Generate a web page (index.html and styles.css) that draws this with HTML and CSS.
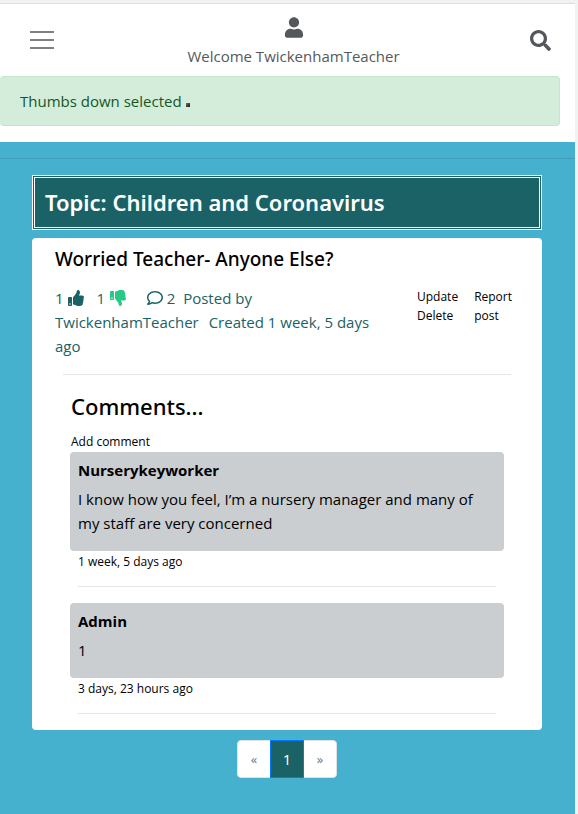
FILE: index.html
```html
<!DOCTYPE html>
<html lang="en">
<head>
<meta charset="utf-8">
<meta name="viewport" content="width=device-width, initial-scale=1">
<title>Topic: Children and Coronavirus</title>
<link rel="stylesheet" href="styles.css">
</head>
<body>
<div class="page">
  <header class="navbar">
    <button class="nav-toggle" type="button" aria-label="Menu">
      <svg viewBox="0 0 30 30" width="30" height="30"><path d="M3 7h24M3 15h24M3 23h24" stroke="#808080" stroke-width="2"/></svg>
    </button>
    <a class="account" href="#">
      <svg viewBox="0 0 448 512" width="18" height="21"><path fill="currentColor" d="M224 256c70.7 0 128-57.3 128-128S294.7 0 224 0 96 57.3 96 128s57.3 128 128 128zm89.6 32h-16.7c-22.2 10.2-46.9 16-72.9 16s-50.6-5.8-72.9-16h-16.7C60.2 288 0 348.2 0 422.4V464c0 26.5 21.5 48 48 48h352c26.5 0 48-21.5 48-48v-41.6c0-74.2-60.2-134.4-134.4-134.4z"/></svg>
      <span>Welcome TwickenhamTeacher</span>
    </a>
    <button class="search" type="button" aria-label="Search">
      <svg viewBox="0 0 512 512" width="21" height="21"><path fill="currentColor" d="M505 442.7L405.3 343c-4.5-4.5-10.6-7-17-7H372c27.6-35.3 44-79.7 44-128C416 93.1 322.9 0 208 0S0 93.1 0 208s93.1 208 208 208c48.3 0 92.7-16.4 128-44v16.3c0 6.4 2.5 12.5 7 17l99.7 99.7c9.4 9.4 24.6 9.4 33.9 0l28.3-28.3c9.4-9.4 9.4-24.6.1-34zM208 336c-70.7 0-128-57.2-128-128 0-70.7 57.2-128 128-128 70.7 0 128 57.2 128 128 0 70.7-57.2 128-128 128z"/></svg>
    </button>
  </header>
  <div class="alert" role="alert">Thumbs down selected <span class="mark"></span></div>
  <main class="content">
    <hr class="rule-top">
    <div class="container">
      <h1 class="topic">Topic: Children and Coronavirus</h1>
      <article class="card">
        <h2 class="post-title">Worried Teacher- Anyone Else?</h2>
        <div class="post-row">
          <p class="meta">
            <a href="#" class="vote">1 <svg viewBox="0 0 512 512" width="16" height="16" aria-hidden="true"><path fill="#1a6265" d="M104 224H24c-13.255 0-24 10.745-24 24v240c0 13.255 10.745 24 24 24h80c13.255 0 24-10.745 24-24V248c0-13.255-10.745-24-24-24zM64 472c-13.255 0-24-10.745-24-24s10.745-24 24-24 24 10.745 24 24-10.745 24-24 24zM384 81.452c0 42.416-25.97 66.208-33.277 94.548h101.723c33.397 0 59.397 27.746 59.553 58.098.084 17.938-7.546 37.249-19.439 49.197l-.11.11c9.836 23.337 8.237 56.037-9.308 79.469 8.681 25.895-.069 57.704-16.382 74.757 4.298 17.598 2.244 32.575-6.148 44.632C440.202 511.587 389.616 512 346.839 512l-2.845-.001c-48.287-.017-87.806-17.598-119.56-31.725-15.957-7.099-36.821-15.887-52.651-16.178-6.54-.12-11.783-5.457-11.783-11.998v-213.77c0-3.2 1.282-6.271 3.558-8.521 39.614-39.144 56.648-80.587 89.117-113.111 14.804-14.832 20.188-37.236 25.393-58.902C282.515 39.293 291.817 0 312 0c24 0 72 8 72 81.452z"/></svg></a>
            <a href="#" class="vote">1 <svg viewBox="0 0 512 512" width="16" height="16" aria-hidden="true"><path fill="#28c987" d="M0 56v240c0 13.255 10.745 24 24 24h80c13.255 0 24-10.745 24-24V56c0-13.255-10.745-24-24-24H24C10.745 32 0 42.745 0 56zm40 200c0-13.255 10.745-24 24-24s24 10.745 24 24-10.745 24-24 24-24-10.745-24-24zm272 256c-20.183 0-29.485-39.293-33.931-57.795-5.206-21.666-10.589-44.07-25.393-58.902-32.469-32.524-49.503-73.967-89.117-113.111a11.98 11.98 0 0 1-3.558-8.521V59.901c0-6.541 5.243-11.878 11.783-11.998 15.831-.29 36.694-9.079 52.651-16.178C256.189 17.598 295.709.017 343.995 0h2.844c42.777 0 93.363.413 113.774 29.737 8.392 12.057 10.446 27.034 6.148 44.632 16.312 17.053 25.063 48.863 16.382 74.757 17.544 23.432 19.143 56.132 9.308 79.469l.11.11c11.893 11.949 19.523 31.259 19.439 49.197-.156 30.352-26.157 58.098-59.553 58.098H350.723C358.03 364.34 384 388.132 384 430.548 384 504 336 512 312 512z"/></svg></a>
            <span class="replies"><svg viewBox="0 0 512 512" width="16" height="16" aria-hidden="true"><path fill="#1a6265" d="M256 32C114.6 32 0 125.1 0 240c0 47.6 19.9 91.2 52.9 126.3C38 405.7 7 439.1 6.5 439.5c-6.6 7-8.4 17.2-4.6 26S14.4 480 24 480c61.5 0 110-25.7 139.1-46.3C192 442.8 223.2 448 256 448c141.4 0 256-93.1 256-208S397.4 32 256 32zm0 368c-26.7 0-53.1-4.1-78.4-12.1l-22.7-7.2-19.5 13.8c-14.3 10.1-33.9 21.4-57.5 29 7.3-12.1 14.4-25.7 19.9-40.2l10.6-28.1-20.6-21.8C69.7 314.1 48 282.2 48 240c0-88.2 93.3-160 208-160s208 71.8 208 160-93.3 160-208 160z"/></svg> 2</span>
            Posted by <span class="author">TwickenhamTeacher</span>
            Created 1 week, 5 days ago
          </p>
          <nav class="actions">
            <div><a href="#">Update</a><a href="#">Delete</a></div>
            <div><a href="#">Report post</a></div>
          </nav>
        </div>
        <hr class="rule-post">
        <section class="comments">
          <h3 class="comments-title">Comments...</h3>
          <a class="add-comment" href="#">Add comment</a>
          <div class="comment">
            <h4>Nurserykeyworker</h4>
            <p>I know how you feel, I’m a nursery manager and many of my staff are very concerned</p>
          </div>
          <p class="time">1 week, 5 days ago</p>
          <hr class="rule-comment">
          <div class="comment">
            <h4>Admin</h4>
            <p>1</p>
          </div>
          <p class="time">3 days, 23 hours ago</p>
          <hr class="rule-comment">
        </section>
      </article>
      <nav class="pagination" aria-label="Pages">
        <a href="#" class="step">«</a><a href="#" class="current">1</a><a href="#" class="step">»</a>
      </nav>
    </div>
  </main>
</div>
</body>
</html>
```
FILE: styles.css
```css
* { box-sizing: border-box; }

body {
  margin: 0;
  padding: 3px 3px 0 0;
  background: #f1f3f3;
  font-family: "Open Sans", "Noto Sans", sans-serif;
  font-size: 15px;
  line-height: 24px;
  color: #000;
}

h1, h2, h3, h4, p { margin: 0; }
hr { height: 1px; border: 0; margin: 0; background: #e5e5e5; }
a { color: inherit; text-decoration: none; }
svg { fill: none; }

.page {
  display: flex;
  flex-direction: column;
  min-height: calc(100vh - 3px);
  background: #fff;
  border-top: 1px solid #dcdfdf;
}

.navbar {
  display: flex;
  justify-content: space-between;
  align-items: center;
  height: 72px;
  padding: 0 24px 0 27px;
  color: #55585b;
}
.nav-toggle, .search {
  display: flex;
  padding: 0;
  border: 0;
  background: none;
  color: inherit;
}
.account {
  display: flex;
  flex-direction: column;
  align-items: center;
  gap: 6px;
  padding-top: 4px;
}

.alert {
  margin: 0 15px 16px 0;
  padding: 12px 20px;
  border: 1px solid #c3e6cb;
  border-left-width: 0;
  border-radius: 4px;
  background: #d4edda;
  color: #155724;
}
.mark {
  display: inline-block;
  width: 4px;
  height: 4px;
  background: linear-gradient(135deg, #777, #111);
}

.content {
  flex: 1;
  padding-top: 16px;
  background: #45b1ce;
}
.rule-top { background: #3e9fb9; }
.container { padding: 16px 33px 36px 32px; }

.topic, .post-title, .comments-title {
  font-family: "Noto Sans", "Open Sans", sans-serif;
  font-weight: 500;
}
.topic, .comments-title {
  font-size: 22px;
  line-height: 29px;
}
.topic {
  margin-bottom: 8px;
  padding: 10px;
  border: 3px double #fff;
  background: #1a6265;
  color: #fff;
  font-weight: 600;
}

.card {
  padding: 9px 23px 16px;
  border-radius: 4px;
  background: #fff;
}
.post-title {
  font-size: 19px;
  line-height: 24px;
}
.post-row {
  display: flex;
  justify-content: space-between;
  gap: 36px;
  padding: 15px 0 16px;
}
.meta { flex: 1; color: #1a6265; }
.meta svg { margin-left: 1px; vertical-align: -2px; }
.vote { margin-right: 8px; }
.replies { margin: 0 4px 0 8px; }
.author { margin-right: 6px; }
.actions {
  display: flex;
  gap: 16px;
  width: 102px;
  padding-top: 1px;
  font-size: 12px;
  line-height: 19px;
}
.actions a { display: block; }
.rule-post { margin: 0 8px; }

.comments { padding: 17px 15px 0; }
.comments-title { padding-left: 1px; }
.add-comment {
  display: block;
  margin-top: 11px;
  padding-left: 1px;
  font-size: 12px;
  line-height: 20px;
}
.comment {
  padding: 8px 8px 16px;
  border-radius: 4px;
  background: #caced1;
}
.comment h4 {
  margin-bottom: 7px;
  font-size: 15px;
  font-weight: 700;
  line-height: 20px;
}
.time {
  padding-left: 8px;
  font-size: 12px;
  line-height: 22px;
}
.rule-comment { margin: 13px 8px 16px; }
.rule-comment:last-child { margin-bottom: 0; }

.pagination {
  display: flex;
  justify-content: center;
  margin-top: 10px;
}
.pagination a {
  width: 34px;
  padding: 6px 0;
  border: 1px solid #dee2e6;
  background: #fff;
  text-align: center;
}
.pagination a + a { margin-left: -1px; }
.pagination .step { color: #6c757d; font-size: 13px; }
.pagination .step:first-child { border-radius: 4px 0 0 4px; }
.pagination .step:last-child { border-radius: 0 4px 4px 0; }
.pagination .current {
  position: relative;
  border-color: #007bff;
  background: #1a6265;
  color: #fff;
}
```
